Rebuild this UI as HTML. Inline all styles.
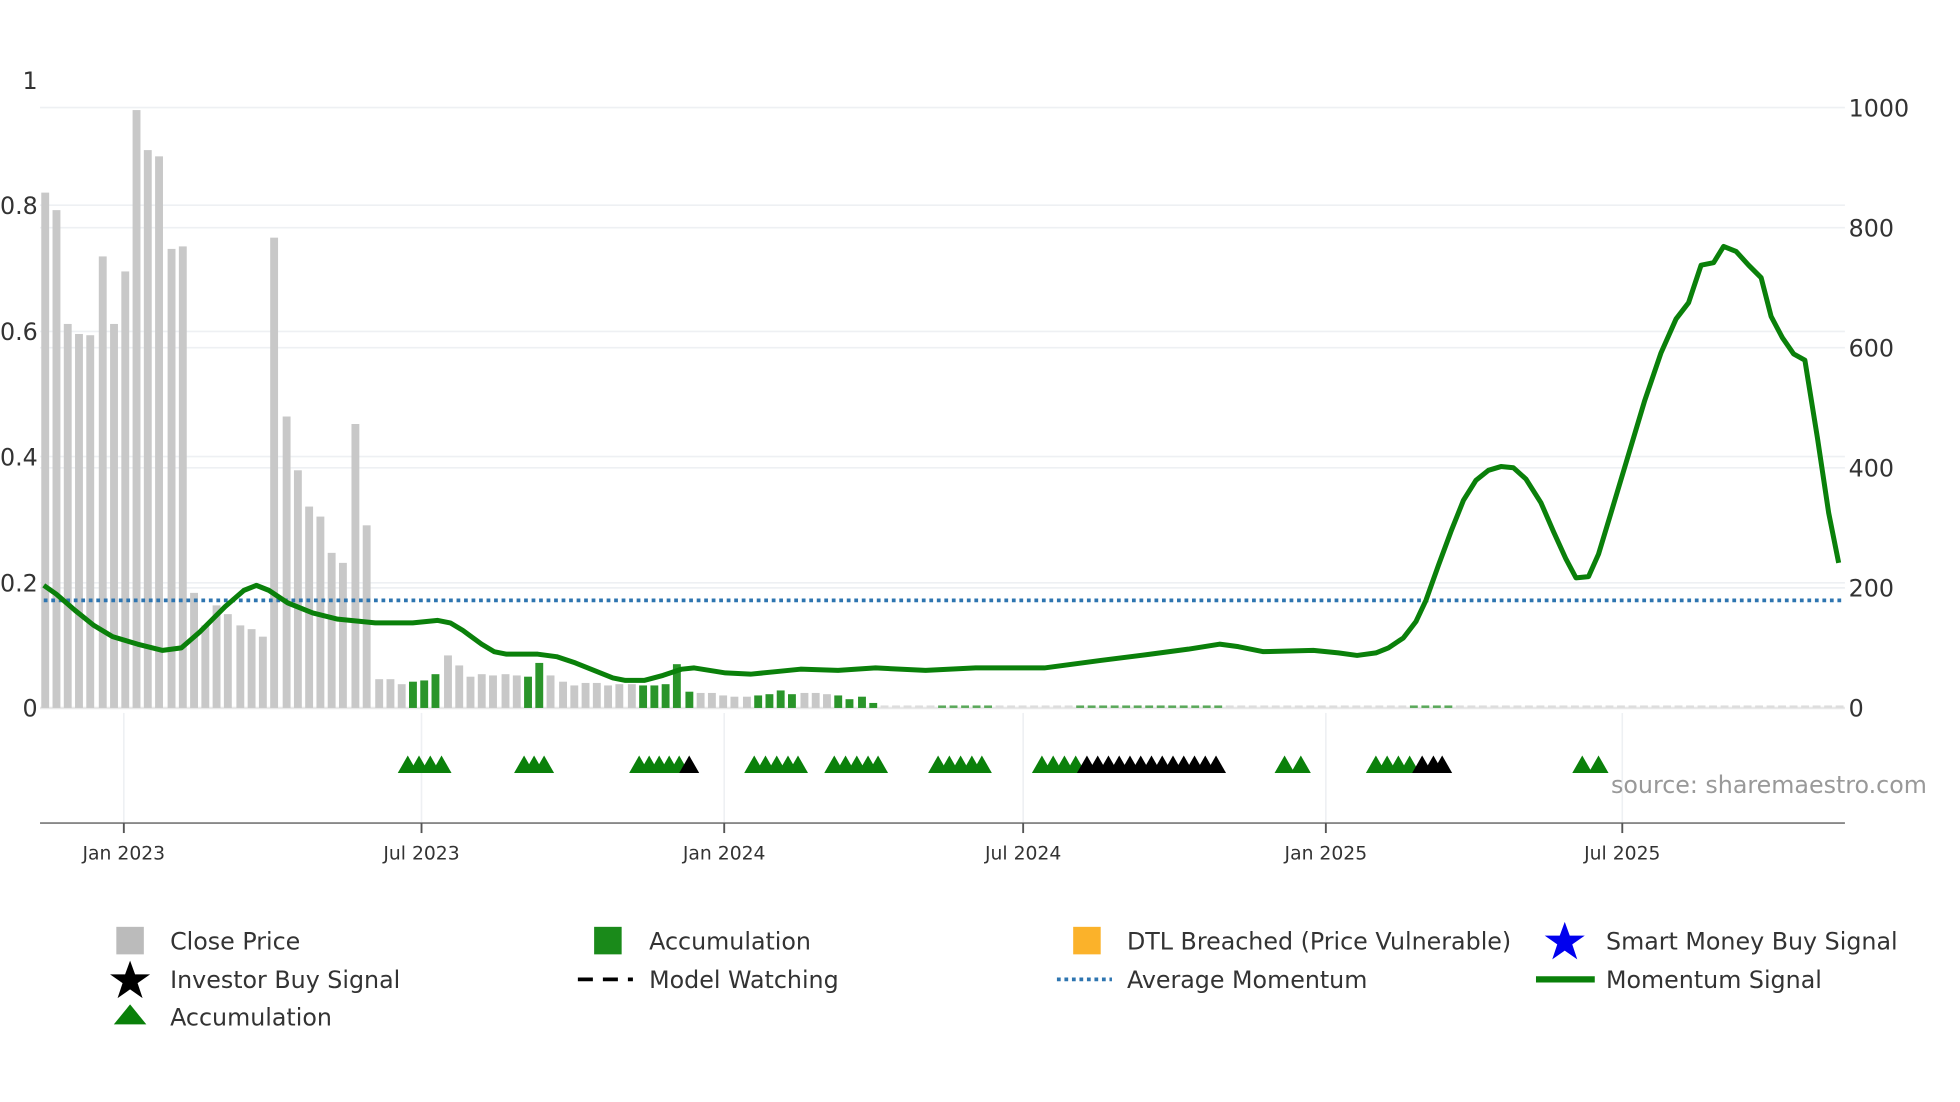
<!DOCTYPE html>
<html><head><meta charset="utf-8"><style>
html,body{margin:0;padding:0;background:#fff;width:1960px;height:1102px;overflow:hidden}
svg{display:block}
text{font-family:"DejaVu Sans","Liberation Sans",sans-serif;fill:#333}
</style></head><body>
<svg width="1960" height="1102" viewBox="0 0 1567 881" preserveAspectRatio="xMinYMin meet" xmlns="http://www.w3.org/2000/svg">
<g stroke="#eef0f3" stroke-width="1.3">
<line x1="32" x2="1475" y1="86" y2="86"/><line x1="32" x2="1475" y1="164" y2="164"/><line x1="32" x2="1475" y1="182" y2="182"/><line x1="32" x2="1475" y1="265" y2="265"/><line x1="32" x2="1475" y1="278" y2="278"/><line x1="32" x2="1475" y1="365" y2="365"/><line x1="32" x2="1475" y1="374" y2="374"/><line x1="32" x2="1475" y1="466" y2="466"/><line x1="32" x2="1475" y1="470" y2="470"/><line x1="32" x2="1475" y1="566" y2="566" stroke="#e8e8e8" stroke-width="2"/>
<line x1="99" x2="99" y1="570" y2="658"/><line x1="337" x2="337" y1="570" y2="658"/><line x1="579" x2="579" y1="570" y2="658"/><line x1="818" x2="818" y1="570" y2="658"/><line x1="1060" x2="1060" y1="570" y2="658"/><line x1="1297" x2="1297" y1="570" y2="658"/>
</g>
<g id="bars"></g>
<g id="tri"></g>
<line x1="35" x2="1472" y1="480" y2="480" stroke="#2e75b0" stroke-width="3" stroke-dasharray="3,3"/>
<polyline fill="none" stroke="#0a800a" stroke-width="4" stroke-linejoin="round" points="35,468 45,475 60,488 75,500 90,509 110,515 130,520 145,518 160,505 180,485 195,472 205,468 215,472 230,482 250,490 270,495 300,498 330,498 350,496 360,498 370,504 385,515 395,521 405,523 430,523 445,525 460,530 475,536 490,542 500,544 515,544 530,540 545,535 555,534 580,538 600,539 620,537 640,535 670,536 700,534 740,536 780,534 835,534 880,528 920,523 950,519 975,515 990,517 1010,521 1050,520 1070,522 1085,524 1100,522 1110,518 1122,510 1132,497 1140,480 1150,452 1160,425 1170,400 1180,384 1190,376 1200,373 1210,374 1220,383 1232,402 1242,425 1252,447 1260,462 1270,461 1278,443 1288,410 1300,370 1315,320 1328,282 1340,255 1350,242 1360,212 1370,210 1378,197 1388,201 1398,212 1408,222 1416,253 1425,270 1434,283 1443,288 1453,350 1462,410 1470,450"/>
<line x1="32" x2="1475" y1="658" y2="658" stroke="#888" stroke-width="1.5"/>
<g stroke="#555" stroke-width="1.5"><line x1="99" x2="99" y1="658" y2="666"/><line x1="337" x2="337" y1="658" y2="666"/><line x1="579" x2="579" y1="658" y2="666"/><line x1="818" x2="818" y1="658" y2="666"/><line x1="1060" x2="1060" y1="658" y2="666"/><line x1="1297" x2="1297" y1="658" y2="666"/></g>
<g font-size="19"><text x="18" y="71">1</text><text x="0" y="171">0.8</text><text x="0" y="272">0.6</text><text x="0" y="372">0.4</text><text x="0" y="473">0.2</text><text x="18" y="573">0</text>
<text x="1478" y="93">1000</text><text x="1478" y="189">800</text><text x="1478" y="285">600</text><text x="1478" y="381">400</text><text x="1478" y="477">200</text><text x="1478" y="573">0</text></g>
<g font-size="15" text-anchor="middle"><text x="99" y="687">Jan 2023</text><text x="337" y="687">Jul 2023</text><text x="579" y="687">Jan 2024</text><text x="818" y="687">Jul 2024</text><text x="1060" y="687">Jan 2025</text><text x="1297" y="687">Jul 2025</text></g>
<text x="1288" y="634" font-size="19" style="fill:#999">source: sharemaestro.com</text>
<g font-size="19">
<rect x="93" y="741" width="22" height="22" fill="#bbb"/><text x="136" y="759">Close Price</text>
<rect x="475" y="741" width="22" height="22" fill="#1a8a1a"/><text x="519" y="759">Accumulation</text>
<rect x="858" y="741" width="22" height="22" fill="#fbb22a"/><text x="901" y="759">DTL Breached (Price Vulnerable)</text>
<polygon fill="#0000ee" points="1251,737 1255,748 1267,748 1257,755 1261,767 1251,760 1241,767 1245,755 1235,748 1247,748"/><text x="1284" y="759">Smart Money Buy Signal</text>
<polygon fill="#000" points="104,768 108,779 120,779 110,786 114,798 104,791 94,798 98,786 88,779 100,779"/><text x="136" y="790">Investor Buy Signal</text>
<line x1="462" x2="506" y1="783" y2="783" stroke="#000" stroke-width="3" stroke-dasharray="12,8"/><text x="519" y="790">Model Watching</text>
<line x1="845" x2="889" y1="783" y2="783" stroke="#2e75b0" stroke-width="3" stroke-dasharray="3,3"/><text x="901" y="790">Average Momentum</text>
<line x1="1228" x2="1275" y1="783" y2="783" stroke="#0a800a" stroke-width="5"/><text x="1284" y="790">Momentum Signal</text>
<polygon fill="#0a800a" points="104,803 117,819 91,819"/><text x="136" y="820">Accumulation</text>
</g>
</svg>
<script>
var b=[[33,154,0],[42,168,0],[51,259,0],[60,267,0],[69,268,0],[79,205,0],[88,259,0],[97,217,0],[106,88,0],[115,120,0],[124,125,0],[134,199,0],[143,197,0],[152,474,0],[161,500,0],[170,484,0],[179,491,0],[189,500,0],[198,503,0],[207,509,0],[216,190,0],[226,333,0],[235,376,0],[244,405,0],[253,413,0],[262,442,0],[271,450,0],[281,339,0],[290,420,0],[300,543,0],[309,543,0],[318,547,0],[327,545,1],[336,544,1],[345,539,1],[355,524,0],[364,532,0],[373,541,0],[382,539,0],[391,540,0],[401,539,0],[410,540,0],[419,541,1],[428,530,1],[437,540,0],[447,545,0],[456,548,0],[465,546,0],[474,546,0],[483,548,0],[492,547,0],[502,547,0],[511,548,1],[520,548,1],[529,547,1],[538,531,1],[548,553,1],[557,554,0],[566,554,0],[575,556,0],[584,557,0],[594,557,0],[603,556,1],[612,555,1],[621,552,1],[630,555,1],[640,554,0],[649,554,0],[658,555,0],[667,556,1],[676,559,1],[686,557,1],[695,562,1]];
var s='';b.forEach(function(a){s+='<rect x="'+a[0]+'" y="'+a[1]+'" width="6.3" height="'+(566-a[1])+'" fill="'+(a[2]?'#2a952a':'#c8c8c8')+'"/>';});
for(var x=704;x<1470;x+=9.2){s+='<rect x="'+x+'" y="564" width="6.3" height="2" fill="'+((x>745&&x<790)||(x>860&&x<980)||(x>1120&&x<1160)?'#5aa85a':'#ddd')+'"/>';}
document.getElementById('bars').innerHTML=s;
var t='';function tr(x,c){t+='<polygon fill="'+c+'" points="'+x+',604 '+(x+8)+',618 '+(x-8)+',618"/>';}
[326,335,344,353].forEach(function(x){tr(x,'#0a800a')});
[419,427,435].forEach(function(x){tr(x,'#0a800a')});
[511,519,527,535,543].forEach(function(x){tr(x,'#0a800a')});tr(551,'#000');
[603,612,621,630,638].forEach(function(x){tr(x,'#0a800a')});
[667,676,685,694,702].forEach(function(x){tr(x,'#0a800a')});
[750,759,768,777,785].forEach(function(x){tr(x,'#0a800a')});
[833,842,851,860].forEach(function(x){tr(x,'#0a800a')});
for(var x=869;x<=979;x+=8.6)tr(x,'#000');
[1027,1040].forEach(function(x){tr(x,'#0a800a')});
[1100,1109,1118,1127].forEach(function(x){tr(x,'#0a800a')});[1137,1146,1153].forEach(function(x){tr(x,'#000')});
[1265,1278].forEach(function(x){tr(x,'#0a800a')});
document.getElementById('tri').innerHTML=t;
</script>
</body></html>
